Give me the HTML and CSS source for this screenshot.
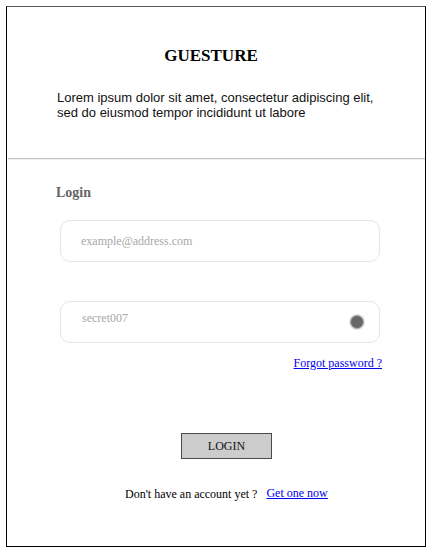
FILE: index.html
```html
<!DOCTYPE html>
<html>
<head>
<meta charset="utf-8">
<link rel="stylesheet" href="styles.css">
</head>
<body>
<div class="frame">
  <header class="header">
    <h1 class="title">GUESTURE</h1>
    <p class="intro">Lorem ipsum dolor sit amet, consectetur adipiscing elit,<br>sed do eiusmod tempor incididunt ut labore</p>
  </header>
  <div class="divider"></div>
  <section class="login">
    <div class="label">Login</div>
    <div class="field field-email"><span class="placeholder">example@address.com</span></div>
    <div class="field field-pass"><span class="placeholder">secret007</span><span class="dot"></span></div>
    <div class="forgot-row"><a href="#" class="link">Forgot password ?</a></div>
    <button class="btn">LOGIN</button>
    <div class="signup"><span>Don't have an account yet ?</span><a href="#" class="link">Get one now</a></div>
  </section>
</div>
</body>
</html>
```
FILE: styles.css
```css
* { box-sizing: border-box; }
body { margin: 0; background: #fff; font-family: "Liberation Serif", serif; color: #000; }
.frame {
  margin: 6px 0 0 6px;
  width: 420px;
  height: 541px;
  border: 1px solid #000;
  border-top-color: #5a5a5a;
}
.header { padding-top: 39px; }
.title {
  margin: 0;
  padding-right: 10px;
  font-size: 17px;
  line-height: 20px;
  font-weight: bold;
  text-align: center;
}
.intro {
  margin: 24px 0 0;
  padding-left: 50px;
  font-family: "Liberation Sans", Arial, sans-serif;
  font-size: 13px;
  line-height: 15px;
  color: #111;
}
.divider {
  margin: 38px 0 0 1px;
  height: 2px;
  border-top: 1px solid #c4c4c4;
  border-bottom: 1px solid #ededed;
}
.login { display: flex; flex-direction: column; align-items: flex-start; }
.label {
  margin: 25px 0 0 49px;
  font-size: 14px;
  line-height: 16px;
  font-weight: bold;
  color: #666;
}
.field {
  margin-left: 53px;
  width: 320px;
  height: 42px;
  border: 1px solid #e6e6e6;
  border-radius: 10px;
  display: flex;
  font-size: 12px;
  line-height: 14px;
}
.placeholder { color: #a8a8a8; }
.field-email { margin-top: 19px; align-items: center; padding-left: 20px; }
.field-pass {
  margin-top: 39px;
  padding: 9px 15px 0 21px;
  justify-content: space-between;
  align-items: flex-start;
}
.dot {
  margin-top: 4px;
  width: 14px;
  height: 14px;
  border-radius: 50%;
  background: #676767;
  border: 1px solid #b0b0b0;
  box-shadow: 0 0 0 1px #e2e2e2;
}
.forgot-row {
  margin-top: 13px;
  align-self: stretch;
  text-align: right;
  padding-right: 43px;
  font-size: 12px;
  line-height: 14px;
}
.link { color: #0000ee; text-decoration: underline; }
.btn {
  margin: 63px 0 0 174px;
  width: 91px;
  height: 26px;
  padding: 0;
  background: #cccccc;
  border: 1px solid #4a4a4a;
  font-family: "Liberation Serif", serif;
  font-size: 12px;
  color: #111;
}
.signup {
  margin: 28px 0 0 118px;
  font-size: 12px;
  line-height: 14px;
  display: flex;
  gap: 9px;
}
.signup .link { position: relative; top: -1px; }
```
